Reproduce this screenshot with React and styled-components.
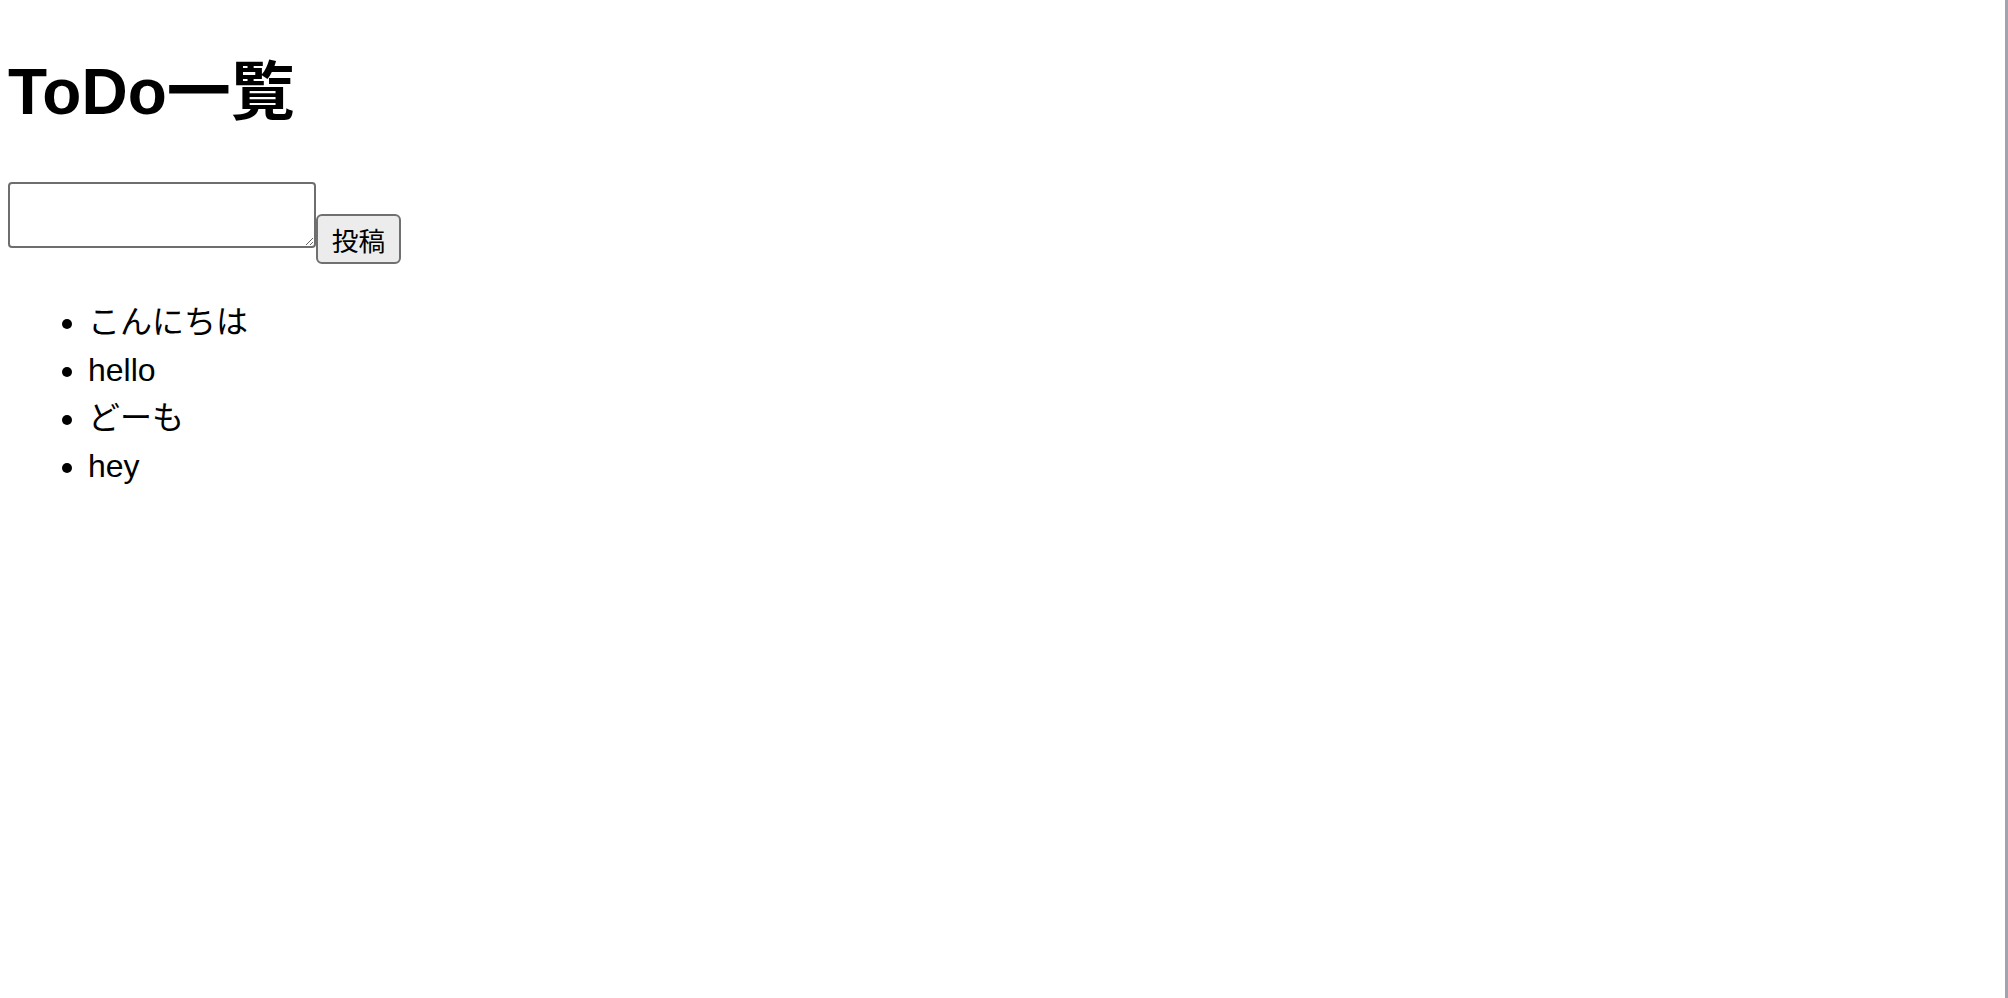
import styled, { createGlobalStyle } from 'styled-components';
import { useState } from 'react';

const GlobalStyle = createGlobalStyle`
  html {
    min-height: 100vh;
    background: #fff;
    box-shadow: inset -3px 0 0 #a3a3b0;
  }
  body {
    margin: 0;
    color: #000;
    font-family: "Liberation Sans", "Noto Sans CJK JP", sans-serif;
  }
`;

const Page = styled.div`
  padding: 0 8px;
`;

const Title = styled.h1`
  margin: 52px 0 50px;
  font-size: 64px;
  font-weight: 700;
  line-height: 80px;
`;

const PostForm = styled.div`
  display: flex;
  align-items: flex-start;
`;

const TodoInput = styled.textarea`
  box-sizing: border-box;
  width: 308px;
  height: 66px;
  padding: 4px;
  border: 2px solid #6e6e6e;
  border-radius: 4px;
  font-family: "Liberation Mono", monospace;
  font-size: 26px;
  background: #fff;
`;

const PostButton = styled.button`
  box-sizing: border-box;
  width: 85px;
  height: 50px;
  margin-top: 32px;
  padding: 0;
  border: 2px solid #707070;
  border-radius: 6px;
  background: #ececec;
  color: #000;
  font-family: "Liberation Sans", "Noto Sans CJK JP", sans-serif;
  font-size: 26.67px;
`;

const TodoList = styled.ul`
  margin: 34px 0;
  padding-left: 80px;
  font-size: 32px;
  line-height: 48px;
`;

const TodoItem = styled.li``;

const App = () => {
  const [text, setText] = useState('');
  const [todos] = useState(['こんにちは', 'hello', 'どーも', 'hey']);

  return (
    <Page>
      <GlobalStyle />
      <Title>ToDo一覧</Title>
      <PostForm>
        <TodoInput value={text} onChange={(e) => setText(e.target.value)} />
        <PostButton type="button">投稿</PostButton>
      </PostForm>
      <TodoList>
        {todos.map((it, idx) => (
          <TodoItem key={idx}>{it}</TodoItem>
        ))}
      </TodoList>
    </Page>
  );
};

export default App;
